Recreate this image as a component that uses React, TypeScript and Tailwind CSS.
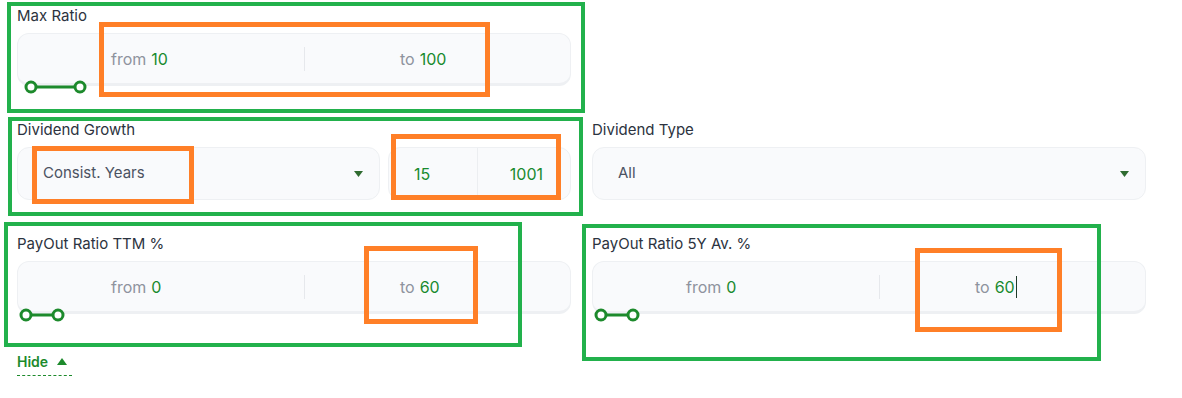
import React from 'react'

const box = 'relative h-[53px] rounded-[12px] border border-[#eef0f3] border-b-[3px] bg-[#f9fafc]'

function Label({ text }: { text: string }) {
  return <div className="h-[20px] leading-[20px] text-[15px] text-[#2c3340] mb-[7px]">{text}</div>
}

function Thumbs({ a, b }: { a: number; b: number }) {
  // slider handles sit over the lower edge of the range box
  return (
    <svg className="absolute left-0 top-[45px]" width="120" height="16" viewBox="0 0 120 16">
      <line x1={a} y1="8" x2={b} y2="8" stroke="#1d8a2c" strokeWidth="3" />
      <circle cx={a} cy="8" r="5" fill="#fff" stroke="#1d8a2c" strokeWidth="3" />
      <circle cx={b} cy="8" r="5" fill="#fff" stroke="#1d8a2c" strokeWidth="3" />
    </svg>
  )
}

function Range({ from, to, a, b, caret }: { from: string; to: string; a: number; b: number; caret?: boolean }) {
  return (
    <div className={box}>
      <div className="flex h-full items-center">
        <div className="w-[287px] h-[24px] flex items-center pl-[93px] text-[16px] border-r border-[#e6e8ec]">
          <span className="text-[#8e939e]">from</span>
          <span className="ml-[5px] text-[#198a2f]">{from}</span>
        </div>
        <div className="flex-1 h-[24px] flex items-center pl-[95px] text-[16px]">
          <span className="text-[#8e939e]">to</span>
          <span className="ml-[5px] text-[#198a2f]">{to}</span>
          {caret && <span className="ml-px w-px h-[22px] bg-[#1f3b2a]" />}
        </div>
      </div>
      <Thumbs a={a} b={b} />
    </div>
  )
}

function Caret() {
  return (
    <svg width="9" height="6" viewBox="0 0 9 6">
      <path d="M0 0 L9 0 L4.5 6 Z" fill="#2f6b30" />
    </svg>
  )
}

function Select({ value, w }: { value: string; w?: string }) {
  return (
    <div className={`h-[53px] rounded-[12px] border border-[#eef0f3] bg-[#f9fafc] flex items-center justify-between pl-[25px] pr-[16px] ${w ?? 'flex-1'}`}>
      <span className="text-[15px] text-[#4b5262]">{value}</span>
      <Caret />
    </div>
  )
}

function Mark({ c, cls }: { c: 'g' | 'o'; cls: string }) {
  return (
    <div
      className={`absolute pointer-events-none ${c === 'g' ? 'border-4 border-[#22b14c]' : 'border-[5px] border-[#ff7f27]'} ${cls}`}
    />
  )
}

export default function App() {
  return (
    <div className="relative w-[1182px] h-[398px] bg-white overflow-hidden" style={{ fontFamily: 'Inter, "Noto Sans", sans-serif' }}>
      <div className="grid grid-cols-[554px_554px] gap-x-[21px] gap-y-[34px] px-[17px] pt-[6px]">
        <div>
          <Label text="Max Ratio" />
          <Range from="10" to="100" a={13} b={62} />
        </div>
        <div />

        <div>
          <Label text="Dividend Growth" />
          <div className="flex gap-[8px]">
            <Select value="Consist. Years" w="w-[363px]" />
            <div className="flex-1 h-[53px] rounded-[12px] border border-[#eef0f3] bg-[#f9fafc] flex items-center">
              <div className="w-[89px] h-full flex items-center pl-[25px] text-[16px] text-[#198a2f] border-r border-[#eceef1]">15</div>
              <div className="flex-1 flex justify-end pr-[27px] text-[16px] text-[#198a2f]">1001</div>
            </div>
          </div>
        </div>
        <div>
          <Label text="Dividend Type" />
          <Select value="All" />
        </div>

        <div>
          <Label text="PayOut Ratio TTM %" />
          <Range from="0" to="60" a={8} b={40} />
        </div>
        <div>
          <Label text="PayOut Ratio 5Y Av. %" />
          <Range from="0" to="60" a={8} b={40} caret />
        </div>
      </div>

      <div className="px-[17px] mt-[35px]">
        <div className="inline-flex items-center gap-[9px] pb-[3px] border-b border-dashed border-[#1d8a2c]">
          <span className="text-[14px] font-semibold text-[#1d8a2c]">Hide</span>
          <svg width="10" height="7" viewBox="0 0 10 7" className="mr-[5px]">
            <path d="M0 7 L10 7 L5 0 Z" fill="#1d8a2c" />
          </svg>
        </div>
      </div>

      <Mark c="g" cls="left-[7px] top-[2px] w-[578px] h-[111px]" />
      <Mark c="o" cls="left-[99px] top-[22px] w-[391px] h-[75px]" />
      <Mark c="g" cls="left-[8px] top-[117px] w-[575px] h-[99px]" />
      <Mark c="o" cls="left-[32px] top-[146px] w-[162px] h-[58px]" />
      <Mark c="o" cls="left-[391px] top-[134px] w-[170px] h-[66px]" />
      <Mark c="g" cls="left-[4px] top-[222px] w-[518px] h-[125px]" />
      <Mark c="o" cls="left-[364px] top-[246px] w-[114px] h-[78px]" />
      <Mark c="g" cls="left-[582px] top-[224px] w-[519px] h-[137px]" />
      <Mark c="o" cls="left-[915px] top-[248px] w-[147px] h-[84px]" />
    </div>
  )
}
